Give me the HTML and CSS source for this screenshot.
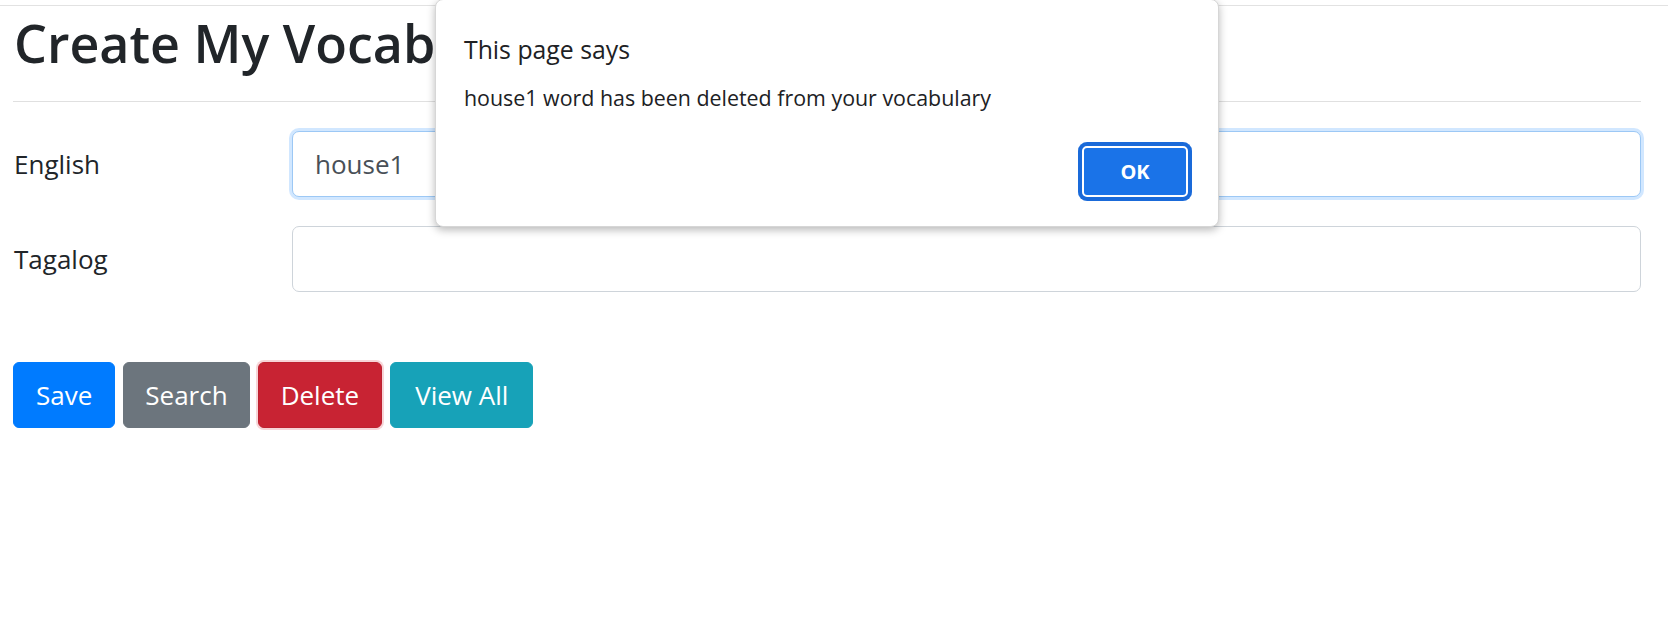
FILE: index.html
```html
<!DOCTYPE html>
<html lang="en">
<head>
<meta charset="utf-8">
<title>Create My Vocabulary</title>
<link rel="stylesheet" href="styles.css">
</head>
<body>
<div class="topline"></div>
<main class="container">
  <h1 class="title">Create My Vocabulary</h1>
  <hr class="divider">
  <form class="vocab-form">
    <div class="form-row">
      <label class="form-label" for="english">English</label>
      <input class="form-input is-focused" id="english" type="text" value="house1">
    </div>
    <div class="form-row">
      <label class="form-label" for="tagalog">Tagalog</label>
      <input class="form-input" id="tagalog" type="text">
    </div>
    <div class="btn-row">
      <button type="button" class="btn btn-save">Save</button>
      <button type="button" class="btn btn-search">Search</button>
      <button type="button" class="btn btn-delete">Delete</button>
      <button type="button" class="btn btn-view">View All</button>
    </div>
  </form>
</main>
<div class="alert-dialog" role="alertdialog">
  <div class="alert-title">This page says</div>
  <div class="alert-message">house1 word has been deleted from your vocabulary</div>
  <div class="alert-actions"><button type="button" class="alert-ok">OK</button></div>
</div>
</body>
</html>
```
FILE: styles.css
```css
* { box-sizing: border-box; }
html, body { margin: 0; padding: 0; background: #fff; }
body {
  font-family: "Open Sans", "Noto Sans", sans-serif;
  color: #212529;
  position: relative;
  min-height: 627px;
}
.topline { height: 6px; border-bottom: 1px solid #e2e2e2; }
.container { padding: 0 27px 0 13px; }
.title {
  font-size: 52px;
  font-weight: 600;
  line-height: 64px;
  margin: 5px 0 0 1px;
  white-space: nowrap;
  color: #212529;
}
.divider {
  border: 0;
  border-top: 1px solid #e0e0e0;
  margin: 26px 0 0;
  height: 0;
}
.vocab-form {
  display: flex;
  flex-direction: column;
  gap: 29px;
  padding-top: 29px;
}
.form-row {
  display: grid;
  grid-template-columns: 279px 1fr;
  align-items: center;
}
.form-label { font-size: 26px; padding-left: 1px; color: #212529; }
.form-input {
  height: 66px;
  border: 1px solid #ced4da;
  border-radius: 7px;
  padding: 0 22px;
  font-family: inherit;
  font-size: 26px;
  color: #495057;
  background: #fff;
  outline: none;
}
.form-input.is-focused {
  border-color: #9cc8f5;
  box-shadow: 0 0 0 3px rgba(0, 123, 255, 0.18);
}
.btn-row { display: flex; gap: 8px; margin-top: 41px; }
.btn {
  height: 66px;
  padding: 0 22px;
  font-family: inherit;
  font-size: 26px;
  color: #fff;
  border: 1px solid transparent;
  border-radius: 6px;
}
.btn-save { background: #007bff; border-color: #007bff; }
.btn-search { background: #6c757d; border-color: #6c757d; padding: 0 21px; }
.btn-delete { background: #c82333; border-color: #bd2130; box-shadow: 0 0 0 2px rgba(225, 83, 97, 0.25); }
.btn-view { background: #17a2b8; border-color: #17a2b8; padding: 0 24px; }

.alert-dialog {
  position: absolute;
  left: 435px;
  top: -1px;
  width: 784px;
  height: 228px;
  background: #fff;
  border: 1px solid #d6d6d6;
  border-radius: 8px;
  box-shadow: 0 3px 8px rgba(0, 0, 0, 0.28);
  padding: 32px 26px 25px 28px;
  display: flex;
  flex-direction: column;
  color: #202124;
}
.alert-title { font-size: 24.8px; line-height: 34px; }
.alert-message { font-size: 21.4px; line-height: 30px; margin-top: 17px; }
.alert-actions { display: flex; justify-content: flex-end; margin-top: auto; }
.alert-ok {
  width: 114px;
  height: 59px;
  border: 0;
  border-radius: 9px;
  background: #1a73e8;
  color: #fff;
  font-family: inherit;
  font-weight: 700;
  font-size: 20px;
  box-shadow: inset 0 0 0 4px #1a6ad9, inset 0 0 0 6px #fff;
}
```
